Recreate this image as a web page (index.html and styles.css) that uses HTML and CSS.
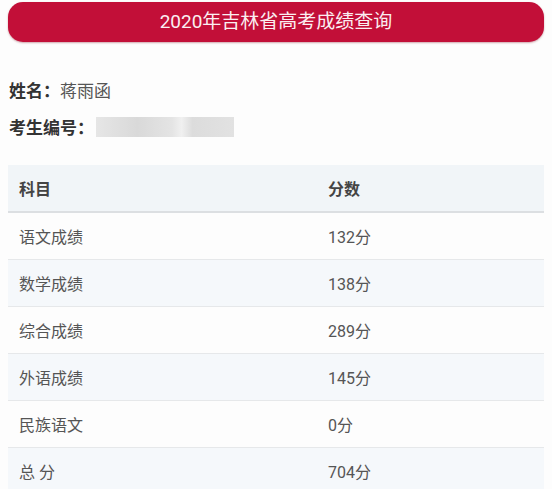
FILE: index.html
```html
<!DOCTYPE html>
<html lang="zh-CN">
<head>
<meta charset="utf-8">
<title>2020年吉林省高考成绩查询</title>
<link rel="stylesheet" href="styles.css">
</head>
<body>
<div class="page">
  <div class="banner">2020年吉林省高考成绩查询</div>
  <div class="info">
    <div class="line"><span class="label">姓名：</span><span class="value">蒋雨函</span></div>
    <div class="line"><span class="label">考生编号：</span><span class="redact"></span></div>
  </div>
  <table class="scores">
    <thead>
      <tr><th>科目</th><th>分数</th></tr>
    </thead>
    <tbody>
      <tr><td>语文成绩</td><td>132分</td></tr>
      <tr><td>数学成绩</td><td>138分</td></tr>
      <tr><td>综合成绩</td><td>289分</td></tr>
      <tr><td>外语成绩</td><td>145分</td></tr>
      <tr><td>民族语文</td><td>0分</td></tr>
      <tr><td>总 分</td><td>704分</td></tr>
    </tbody>
  </table>
</div>
</body>
</html>
```
FILE: styles.css
```css
* { box-sizing: border-box; }
html, body { margin: 0; padding: 0; background: #fdfdfd; }
body {
  font-family: "Roboto", "Noto Sans CJK SC", sans-serif;
  color: #4a4a4a;
}
.page { padding: 2px 8px 0 8px; }
.banner {
  height: 40px;
  border-radius: 15px;
  background: #c20f38;
  color: #fbeef1;
  font-size: 19px;
  line-height: 40px;
  text-align: center;
  box-shadow: 0 1px 2px rgba(120, 0, 20, 0.35);
}
.info { padding: 29px 0 0 1px; }
.line {
  display: flex;
  align-items: center;
  height: 37px;
  font-size: 17px;
}
.label { font-weight: bold; color: #333; }
.value { color: #555; }
.redact {
  display: inline-block;
  width: 138px;
  height: 20px;
  margin-left: 2px;
  background: linear-gradient(90deg, #e6e6e6 0%, #d9d9d9 30%, #e4e4e4 55%, #f0f0f0 62%, #dcdcdc 70%, #e2e2e2 100%);
}
.scores {
  margin-top: 20px;
  width: 100%;
  border-collapse: collapse;
  font-size: 16px;
}
.scores th, .scores td {
  text-align: left;
  height: 47px;
  padding: 0 11px;
  vertical-align: middle;
}
.scores th:first-child, .scores td:first-child { width: 309px; }
.scores thead tr {
  background: #f1f5f8;
  border-bottom: 2px solid #dcdfe2;
}
.scores th { font-weight: bold; color: #444; }
.scores td { color: #555; border-top: 1px solid #e6e8ea; }
.scores tbody tr:first-child td { border-top: none; }
.scores tbody tr:nth-child(odd) { background: #fdfdfd; }
.scores tbody tr:nth-child(even) { background: #f5f8fb; }
```
